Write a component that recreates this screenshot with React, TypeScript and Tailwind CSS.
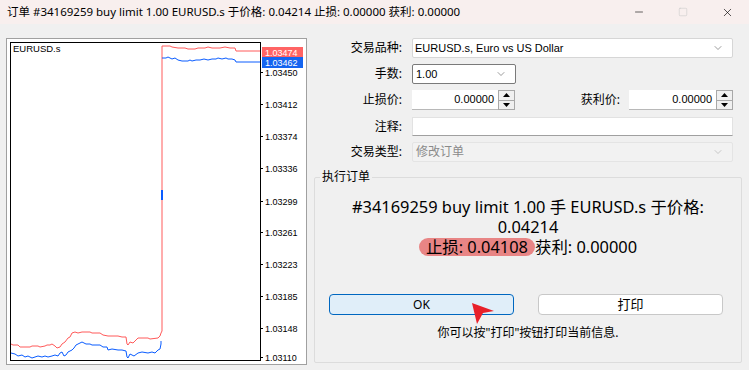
import { ChevronDown, Minus, Square, X } from "lucide-react";

const ui = { fontFamily: '"Noto Sans", "Noto Sans CJK SC", sans-serif' };
const tahoma = { fontFamily: '"Liberation Sans", "Noto Sans CJK SC", sans-serif' };

const axisLabels = [
  { v: "1.03450", y: 72 },
  { v: "1.03412", y: 104 },
  { v: "1.03374", y: 136 },
  { v: "1.03336", y: 168 },
  { v: "1.03299", y: 201 },
  { v: "1.03261", y: 232 },
  { v: "1.03223", y: 264 },
  { v: "1.03185", y: 296 },
  { v: "1.03148", y: 328 },
  { v: "1.03110", y: 357 },
];

const askLine =
  "11,344 13,345 18,345 20,347 30,347 32,346 38,346 40,347 45,346 47,345 50,345 52,344 55,346 57,348 60,347 62,344 65,342 68,338 70,337 72,333 75,332 78,333 82,332 90,332 92,333 100,333 103,335 108,336 118,336 122,337 126,337 127,344 128,345 130,342 133,343 135,341 138,338 142,338 148,338 150,339 158,338 160,336 161,333 162,331 162,46 170,46 172,47 178,48 185,48 188,49 195,49 198,48 205,48 208,47 212,48 220,48 225,47 230,48 235,48 236,51 260,51";

const bidLow =
  "11,353 15,354 18,356 22,355 25,357 28,356 32,358 35,357 38,356 42,357 45,356 48,357 52,356 55,355 58,356 60,353 62,352 64,356 66,355 68,352 70,351 72,350 74,348 76,345 80,343 82,342 86,344 90,344 92,345 100,345 103,347 107,347 108,350 112,349 118,350 122,350 126,351 127,357 128,358 130,354 134,356 138,353 142,352 148,353 152,352 155,353 158,350 160,349 161,344 161,341";

const bidHigh =
  "162,58 166,58 168,57 170,58 172,59 175,58 178,60 182,61 188,61 190,60 192,61 196,60 200,60 204,59 208,60 212,59 216,59 218,58 222,59 226,58 228,59 232,59 235,60 236,62 260,62";

function Chart() {
  return (
    <div className="h-[327px] w-[301px] shrink-0 border border-[#a0a0a0] bg-white">
      <svg width="299" height="325" viewBox="7 39 299 325" style={tahoma}>
        <rect x="10.5" y="42.5" width="250" height="318" fill="white" stroke="#000" />
        <text x="13" y="52" fontSize="9.5" fill="#000">EURUSD.s</text>
        <polyline points={askLine} fill="none" stroke="#ff5a5a" strokeWidth="1" />
        <polyline points={bidLow} fill="none" stroke="#0a5cff" strokeWidth="1" />
        <polyline points={bidHigh} fill="none" stroke="#0a5cff" strokeWidth="1" />
        <line x1="162" y1="190" x2="162" y2="200" stroke="#0a5cff" strokeWidth="2" />
        {axisLabels.map((a) => (
          <g key={a.v}>
            <line x1="260" y1={a.y + 0.5} x2="263" y2={a.y + 0.5} stroke="#000" />
            <text x="265" y={a.y + 3.5} fontSize="9" fill="#000">{a.v}</text>
          </g>
        ))}
        <rect x="262" y="47" width="41" height="10" fill="#ff6464" />
        <text x="265" y="55.5" fontSize="9" fill="#fff">1.03474</text>
        <rect x="262" y="57" width="41" height="11" fill="#1464f0" />
        <text x="265" y="66" fontSize="9" fill="#fff">1.03462</text>
      </svg>
    </div>
  );
}

function Spinner() {
  return (
    <div className="flex h-[20px] w-[17px] shrink-0 flex-col border border-[#a8a8a8] bg-[#f0f0f0]">
      <div className="flex flex-1 items-center justify-center border-b border-[#a8a8a8]">
        <svg width="7" height="4"><polygon points="3.5,0 7,4 0,4" fill="#000" /></svg>
      </div>
      <div className="flex flex-1 items-center justify-center">
        <svg width="7" height="4"><polygon points="0,0 7,0 3.5,4" fill="#000" /></svg>
      </div>
    </div>
  );
}

function Label({ children }: { children: React.ReactNode }) {
  return <div className="w-[88px] shrink-0 text-right text-[12px] text-black">{children}</div>;
}

export default function App() {
  return (
    <div className="flex h-[370px] w-[749px] flex-col overflow-hidden bg-[#f0f0f0]" style={ui}>
      {/* title bar */}
      <div className="flex h-[24px] shrink-0 items-center bg-[#f8efee] pl-[7px]">
        <span className="text-[11.5px] text-black">
          订单 #34169259 buy limit 1.00 EURUSD.s 于价格: 0.04214 止损: 0.00000 获利: 0.00000
        </span>
        <div className="ml-auto flex items-center gap-[33px] pr-[15px]">
          <Minus className="h-[12px] w-[12px] text-black" strokeWidth={1.2} />
          <Square className="h-[10px] w-[10px] text-[#c4c4c4]" strokeWidth={1.2} />
          <X className="h-[13px] w-[13px] text-black" strokeWidth={1.2} />
        </div>
      </div>

      <div className="flex gap-[7px] pl-[6px] pt-[14px]">
        <Chart />

        {/* order form */}
        <div className="flex w-[428px] flex-col">
          <div className="flex h-[20px] items-center gap-[10px]">
            <Label>交易品种:</Label>
            <div className="flex h-[20px] w-[321px] items-center justify-between rounded-[2px] border border-[#d6d6d6] bg-white pl-[2px] pr-[8px] text-[11px]" style={tahoma}>
              EURUSD.s, Euro vs US Dollar
              <ChevronDown className="h-[12px] w-[12px] text-[#666]" strokeWidth={1.3} />
            </div>
          </div>

          <div className="mt-[6px] flex h-[20px] items-center gap-[10px]">
            <Label>手数:</Label>
            <div className="flex h-[20px] w-[104px] items-center justify-between rounded-[2px] border border-[#7a7a7a] bg-white pl-[3px] pr-[8px] text-[11px]" style={tahoma}>
              1.00
              <ChevronDown className="h-[12px] w-[12px] text-[#666]" strokeWidth={1.3} />
            </div>
          </div>

          <div className="mt-[6px] flex h-[20px] items-center">
            <Label>止损价:</Label>
            <div className="ml-[10px] flex h-[20px] w-[86px] items-center justify-end border-b border-[#b8b8b8] bg-white pr-[4px] text-[11px]" style={tahoma}>
              0.00000
            </div>
            <Spinner />
            <div className="w-[105px] shrink-0 text-right text-[12px]">获利价:</div>
            <div className="ml-[9px] flex h-[20px] w-[87px] items-center justify-end border-b border-[#b8b8b8] bg-white pr-[4px] text-[11px]" style={tahoma}>
              0.00000
            </div>
            <Spinner />
          </div>

          <div className="mt-[7px] flex h-[19px] items-center gap-[10px]">
            <Label>注释:</Label>
            <div className="h-[19px] w-[321px] border border-[#e2e2e2] border-b-[#a0a0a0] bg-white" />
          </div>

          <div className="mt-[6px] flex h-[20px] items-center gap-[10px]">
            <Label>交易类型:</Label>
            <div className="flex h-[20px] w-[321px] items-center justify-between rounded-[2px] border border-[#e4e4e4] bg-[#f2f2f2] pl-[3px] pr-[8px] text-[12px] text-[#8a8a8a]">
              修改订单
              <ChevronDown className="h-[12px] w-[12px] text-[#b0b0b0]" strokeWidth={1.3} />
            </div>
          </div>

          {/* execute order group */}
          <fieldset className="mt-[8px] h-[193px] rounded-[2px] border border-[#dcdcdc] px-0">
            <legend className="ml-[5px] px-[2px] text-[12px] leading-[14px]">执行订单</legend>
            <div className="mt-[13px] flex flex-col items-center text-[16.4px] leading-[20px] text-black">
              <div>#34169259 buy limit 1.00 手 EURUSD.s 于价格:</div>
              <div>0.04214</div>
              <div className="flex items-center">
                <span className="rounded-full bg-[#e88585] px-[7px] leading-[18px]">止损: 0.04108</span>
                <span>获利: 0.00000</span>
              </div>
            </div>

            <div className="relative mt-[37px] flex gap-[24px] pl-[14px]">
              <div className="flex h-[21px] w-[185px] items-center justify-center rounded-[4px] border border-[#0067c0] bg-[#e0eef9] text-[12px]">
                OK
              </div>
              <div className="flex h-[21px] w-[185px] items-center justify-center rounded-[4px] border border-[#c8c8c8] bg-white text-[13px]">
                打印
              </div>
              <svg className="absolute left-[155px] top-[8px]" width="26" height="24" viewBox="0 0 26 24">
                <polygon points="2,1 24,9 13,11 7,22" fill="#e8202a" />
              </svg>
            </div>

            <div className="mt-[10px] text-center text-[12px] leading-[16px]">
              你可以按"打印"按钮打印当前信息.
            </div>
          </fieldset>
        </div>
      </div>
    </div>
  );
}
